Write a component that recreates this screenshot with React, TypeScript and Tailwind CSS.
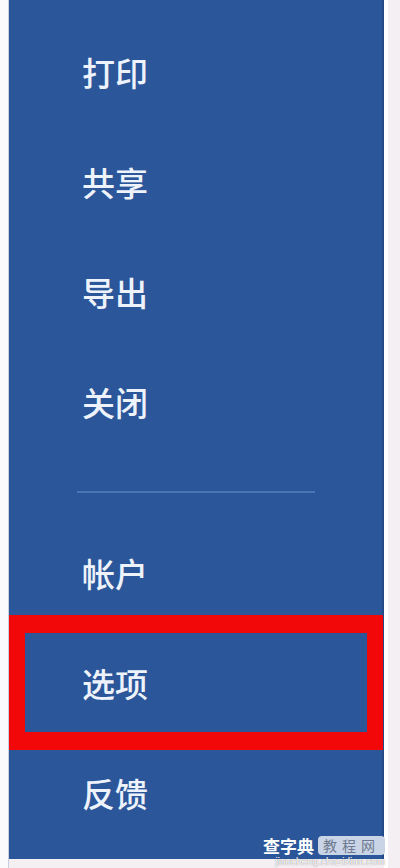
const cjk = { fontFamily: '"Noto Sans CJK SC", "Noto Sans", sans-serif' };

const topItems = ["打印", "共享", "导出", "关闭"];
const bottomItems = ["帐户", "选项", "反馈"];

function MenuItem({ label }: { label: string }) {
  return (
    <div className="flex h-[110px] items-center pl-[73px]">
      <span className="text-[33px] leading-none font-medium text-[#eef3fb]" style={cjk}>
        {label}
      </span>
    </div>
  );
}

export default function App() {
  return (
    <div className="relative flex h-[868px] w-[400px] overflow-hidden bg-[#f4eff2]">
      {/* left margin */}
      <div className="h-full w-[9px] border-r border-[#c9cfdc] bg-[#fafafc]" />

      {/* backstage menu */}
      <div className="relative flex h-[859px] w-[375px] flex-col border-r-2 border-[#234a86] bg-[#2b569a] pt-[17px]">
        {topItems.map((t) => (
          <MenuItem key={t} label={t} />
        ))}

        <div className="mb-[25px] ml-[68px] mt-[34px] h-[2px] w-[238px] bg-[#4a74b3]" />

        {bottomItems.map((t) => (
          <MenuItem key={t} label={t} />
        ))}

        {/* highlight annotation */}
        <div className="absolute left-0 top-[615px] h-[135px] w-[374px] border-x-[16px] border-y-[18px] border-[#f20808]" />
      </div>

      <div className="h-full w-[4px] bg-white" />

      {/* watermark */}
      <div className="absolute bottom-0 right-[15px] flex flex-col items-end">
        <div className="flex items-center gap-[4px]">
          <span className="text-[17px] font-bold leading-none text-white" style={cjk}>
            查字典
          </span>
          <span
            className="rounded-[4px] bg-[#c9d4e6] px-[5px] py-[1px] text-[14px] leading-[17px] tracking-[5px] text-[#6d7a90]"
            style={cjk}
          >
            教程网
          </span>
        </div>
        <span
          className="mb-[1px] mt-[2px] text-[10px] leading-[10px] text-white [text-shadow:0_0_1px_#666]"
          style={{ fontFamily: '"Liberation Sans", sans-serif' }}
        >
          jiaocheng.chazidian.com
        </span>
      </div>
    </div>
  );
}
